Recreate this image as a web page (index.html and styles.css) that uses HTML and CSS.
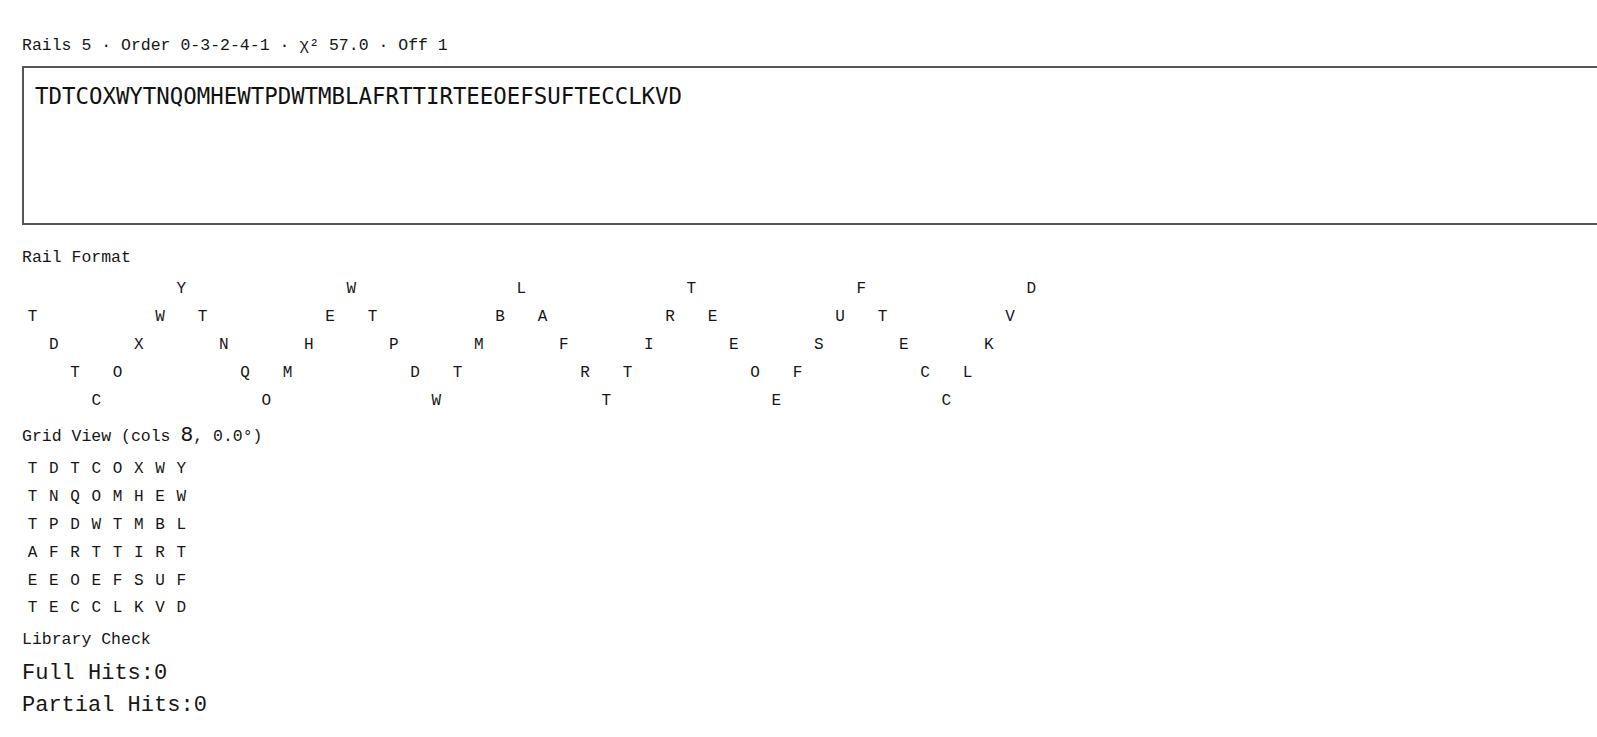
FILE: index.html
```html
<!DOCTYPE html>
<html>
	<head>
		<meta charset="UTF-8">
		<title>Rail Fence</title>
		<link rel="stylesheet" href="styles.css">

		<script type="text/javascript">

			window.onload = function(){

				//密文
				var text = "TDTCOXWYTNQOMHEWTPDWTMBLAFRTTIRTEEOEFSUFTECCLKVD";
				var rails = 5;
				var offset = 1;
				var cycle = 2 * (rails - 1);

				//栅栏格式
				var railBox = document.getElementById("rails");
				for(var r=0 ; r<rails ; r++){
					for(var c=0 ; c<text.length ; c++){
						var p = (c + offset) % cycle;
						var row = p < rails ? p : cycle - p;
						var cell = document.createElement("span");
						cell.className = "cell";
						if(row == r){
							cell.innerHTML = text.charAt(c);
						}
						railBox.appendChild(cell);
					}
				}

				//网格视图
				var gridBox = document.getElementById("grid");
				for(var i=0 ; i<text.length ; i++){
					var g = document.createElement("span");
					g.className = "cell";
					g.innerHTML = text.charAt(i);
					gridBox.appendChild(g);
				}
			};

		</script>

	</head>
	<body>

		<p class="status">Rails 5 · Order 0-3-2-4-1 · χ² 57.0 · Off 1</p>

		<textarea class="cipher" spellcheck="false">TDTCOXWYTNQOMHEWTPDWTMBLAFRTTIRTEEOEFSUFTECCLKVD</textarea>

		<h4 class="label label-rail">Rail Format</h4>
		<div id="rails" class="rails"></div>

		<h4 class="label label-grid">Grid View (cols <span class="alt">8</span>, 0.0°)</h4>
		<div id="grid" class="grid"></div>

		<h4 class="label label-lib">Library Check</h4>
		<p class="hits hits-full">Full Hits:0</p>
		<p class="hits">Partial Hits:0</p>

	</body>
</html>
```

FILE: styles.css
```css
/*去除默认样式*/
*{
	margin: 0;
	padding: 0;
}

html{
	overflow-x: hidden;
}

body{
	font-family: "Liberation Mono", "DejaVu Sans Mono", monospace;
	color: #161616;
	background-color: #fff;
	padding: 36px 22px 0;
}

/*顶部状态*/
.status{
	font-size: 16.5px;
	line-height: 20px;
}

/*密文输入框*/
.cipher{
	display: block;
	box-sizing: border-box;
	width: calc(100% + 60px);
	height: 159px;
	margin-top: 10px;
	padding: 15px 11px 12px;
	border: 2px solid #555;
	font-family: "DejaVu Sans Mono", monospace;
	font-size: 22.4px;
	color: #111;
	resize: none;
	outline: none;
}

/*小标题*/
.label{
	font-size: 16.5px;
	font-weight: normal;
	line-height: 20px;
}

.label-rail{
	margin-top: 23px;
}

.label-grid{
	margin-top: 9px;
}

.label-lib{
	margin-top: 8px;
}

.alt{
	font-family: "DejaVu Sans", sans-serif;
	font-size: 20px;
}

/*栅栏*/
.rails{
	display: grid;
	grid-template-columns: repeat(48, 21.25px);
	grid-auto-rows: 28px;
	margin-top: 7px;
}

/*网格*/
.grid{
	display: grid;
	grid-template-columns: repeat(8, 21.25px);
	grid-auto-rows: 27.9px;
	margin-top: 8px;
}

.cell{
	font-size: 16px;
	line-height: 28px;
	text-align: center;
}

/*结果*/
.hits{
	font-size: 22px;
	line-height: 32px;
}

.hits-full{
	margin-top: 8px;
}
```
